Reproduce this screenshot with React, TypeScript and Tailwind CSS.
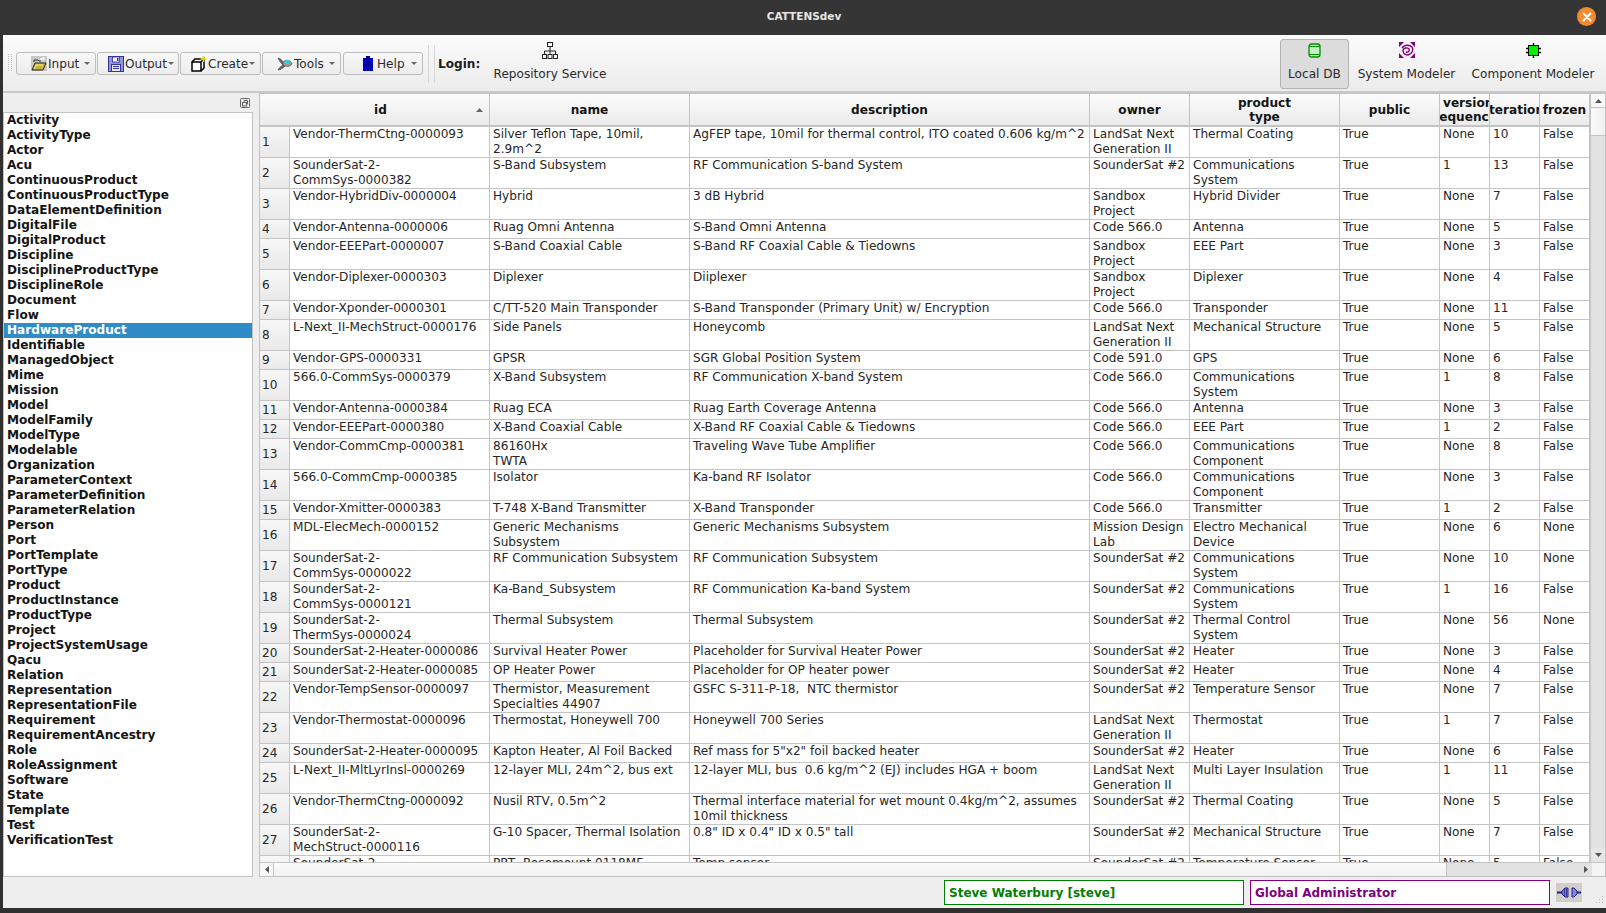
import React from "react";

const listItems = ["Activity","ActivityType","Actor","Acu","ContinuousProduct","ContinuousProductType","DataElementDefinition","DigitalFile","DigitalProduct","Discipline","DisciplineProductType","DisciplineRole","Document","Flow","HardwareProduct","Identifiable","ManagedObject","Mime","Mission","Model","ModelFamily","ModelType","Modelable","Organization","ParameterContext","ParameterDefinition","ParameterRelation","Person","Port","PortTemplate","PortType","Product","ProductInstance","ProductType","Project","ProjectSystemUsage","Qacu","Relation","Representation","RepresentationFile","Requirement","RequirementAncestry","Role","RoleAssignment","Software","State","Template","Test","VerificationTest"];

type Row = [number, string, string, string, string, string, string, string, string];
const rows: Row[] = [
[31,"Vendor-ThermCtng-0000093","Silver Teflon Tape, 10mil,\n2.9m^2","AgFEP tape, 10mil for thermal control, ITO coated 0.606 kg/m^2","LandSat Next\nGeneration II","Thermal Coating","None","10","False"],
[31,"SounderSat-2-\nCommSys-0000382","S-Band Subsystem","RF Communication S-band System","SounderSat #2","Communications\nSystem","1","13","False"],
[31,"Vendor-HybridDiv-0000004","Hybrid","3 dB Hybrid","Sandbox\nProject","Hybrid Divider","None","7","False"],
[19,"Vendor-Antenna-0000006","Ruag Omni Antenna","S-Band Omni Antenna","Code 566.0","Antenna","None","5","False"],
[31,"Vendor-EEEPart-0000007","S-Band Coaxial Cable","S-Band RF Coaxial Cable & Tiedowns","Sandbox\nProject","EEE Part","None","3","False"],
[31,"Vendor-Diplexer-0000303","Diplexer","Diiplexer","Sandbox\nProject","Diplexer","None","4","False"],
[19,"Vendor-Xponder-0000301","C/TT-520 Main Transponder","S-Band Transponder (Primary Unit) w/ Encryption","Code 566.0","Transponder","None","11","False"],
[31,"L-Next_II-MechStruct-0000176","Side Panels","Honeycomb","LandSat Next\nGeneration II","Mechanical Structure","None","5","False"],
[19,"Vendor-GPS-0000331","GPSR","SGR Global Position System","Code 591.0","GPS","None","6","False"],
[31,"566.0-CommSys-0000379","X-Band Subsystem","RF Communication X-band System","Code 566.0","Communications\nSystem","1","8","False"],
[19,"Vendor-Antenna-0000384","Ruag ECA","Ruag Earth Coverage Antenna","Code 566.0","Antenna","None","3","False"],
[19,"Vendor-EEEPart-0000380","X-Band Coaxial Cable","X-Band RF Coaxial Cable & Tiedowns","Code 566.0","EEE Part","1","2","False"],
[31,"Vendor-CommCmp-0000381","86160Hx\nTWTA","Traveling Wave Tube Amplifier","Code 566.0","Communications\nComponent","None","8","False"],
[31,"566.0-CommCmp-0000385","Isolator","Ka-band RF Isolator","Code 566.0","Communications\nComponent","None","3","False"],
[19,"Vendor-Xmitter-0000383","T-748 X-Band Transmitter","X-Band Transponder","Code 566.0","Transmitter","1","2","False"],
[31,"MDL-ElecMech-0000152","Generic Mechanisms\nSubsystem","Generic Mechanisms Subsystem","Mission Design\nLab","Electro Mechanical\nDevice","None","6","None"],
[31,"SounderSat-2-\nCommSys-0000022","RF Communication Subsystem","RF Communication Subsystem","SounderSat #2","Communications\nSystem","None","10","None"],
[31,"SounderSat-2-\nCommSys-0000121","Ka-Band_Subsystem","RF Communication Ka-band System","SounderSat #2","Communications\nSystem","1","16","False"],
[31,"SounderSat-2-\nThermSys-0000024","Thermal Subsystem","Thermal Subsystem","SounderSat #2","Thermal Control\nSystem","None","56","None"],
[19,"SounderSat-2-Heater-0000086","Survival Heater Power","Placeholder for Survival Heater Power","SounderSat #2","Heater","None","3","False"],
[19,"SounderSat-2-Heater-0000085","OP Heater Power","Placeholder for OP heater power","SounderSat #2","Heater","None","4","False"],
[31,"Vendor-TempSensor-0000097","Thermistor, Measurement\nSpecialties 44907","GSFC S-311-P-18,  NTC thermistor","SounderSat #2","Temperature Sensor","None","7","False"],
[31,"Vendor-Thermostat-0000096","Thermostat, Honeywell 700","Honeywell 700 Series","LandSat Next\nGeneration II","Thermostat","1","7","False"],
[19,"SounderSat-2-Heater-0000095","Kapton Heater, Al Foil Backed","Ref mass for 5\"x2\" foil backed heater","SounderSat #2","Heater","None","6","False"],
[31,"L-Next_II-MltLyrInsl-0000269","12-layer MLI, 24m^2, bus ext","12-layer MLI, bus  0.6 kg/m^2 (EJ) includes HGA + boom","LandSat Next\nGeneration II","Multi Layer Insulation","1","11","False"],
[31,"Vendor-ThermCtng-0000092","Nusil RTV, 0.5m^2","Thermal interface material for wet mount 0.4kg/m^2, assumes\n10mil thickness","SounderSat #2","Thermal Coating","None","5","False"],
[31,"SounderSat-2-\nMechStruct-0000116","G-10 Spacer, Thermal Isolation","0.8\" ID x 0.4\" ID x 0.5\" tall","SounderSat #2","Mechanical Structure","None","7","False"],
[31,"SounderSat-2-\nTempSens-0000099","PRT, Rosemount 0118MF","Temp sensor","SounderSat #2","Temperature Sensor","None","5","False"],
];

function Chevron() {
  return <svg width="6" height="3" viewBox="0 0 6 3" className="shrink-0 ml-auto"><path d="M0 0h6L3 3z" fill="#666" /></svg>;
}

function ToolBtn({ icon, label, width, pad, gap }: { icon: React.ReactNode; label: string; width: string; pad: string; gap: string }) {
  return (
    <div className={`${width} ${pad} ${gap} h-[23px] flex items-center pr-[5px] rounded-[3px] border border-[#bdbdbd] bg-gradient-to-b from-[#f8f8f8] to-[#ececec] text-[12.1px] text-[#2b2b2b]`}>
      {icon}
      <span className="leading-none relative top-[1px]">{label}</span>
      <Chevron />
    </div>
  );
}

function Mode({ icon, label, active, width }: { icon: React.ReactNode; label: string; active?: boolean; width: string }) {
  return (
    <div className={`${width} h-[50px] flex flex-col items-center rounded-[3px] border pt-[1px] text-[12.1px] text-[#2a2a2a] ${active ? "border-[#b3b3b3] bg-[#dcdcdc]" : "border-transparent"}`}>
      <div className="h-[18px] flex items-center justify-center">{icon}</div>
      <div className="mt-[7px] leading-[16px] whitespace-nowrap">{label}</div>
    </div>
  );
}

const cellClass = "border-r border-b border-[#c4c4c4] align-top p-0 pl-[3px] text-left overflow-hidden whitespace-pre";
const headClass = "h-[33px] p-0 border-r border-b-2 border-[#c4c4c4] font-bold bg-gradient-to-b from-[#fcfcfc] to-[#ebebeb] overflow-hidden whitespace-nowrap";

export default function App() {
  return (
    <div className="w-[1606px] h-[913px] bg-[#303030] overflow-hidden flex flex-col text-[#2b2b2b]" style={{ fontFamily: '"DejaVu Sans", sans-serif' }}>
      <div className="h-[35px] shrink-0 flex items-center justify-center relative bg-[#353535]">
        <span className="text-[10.5px] font-bold text-[#e6e6e6] relative top-[-1px] left-[1px]">CATTENSdev</span>
        <div className="absolute right-[10px] top-[7px] w-[19px] h-[19px] rounded-full bg-[#f28a2e] flex items-center justify-center">
          <svg width="10" height="10" viewBox="0 0 10 10"><path d="M1.5 1.5l7 7M8.500 1.500l-7 7" stroke="#fff" strokeWidth="2" strokeLinecap="round" /></svg>
        </div>
      </div>
      <div className="ml-[3px] h-[873px] shrink-0 bg-[#eeeeee] flex flex-col">
        <div className="h-[58px] shrink-0 flex items-start bg-gradient-to-b from-[#fbfbfb] to-[#ececec] border-b-2 border-[#c8c8c8]">
          <div className="ml-[5px] mt-[19px] w-[4px] h-[17px] border-x border-dotted border-[#c0c0c0]" />
          <div className="ml-[4px] mt-[17px] flex">
            <ToolBtn width="w-[80px]" pad="pl-[14px]" gap="gap-[1px]" label="Input" icon={
              <svg width="16" height="15" viewBox="0 0 16 15" className="shrink-0"><rect width="16" height="15" fill="#c6c6c6" /><path d="M3 6V4h4l1 1h2" fill="none" stroke="#333" /><path d="M9 4c1-2 3-2 4-1M13 1v3h-3" fill="none" stroke="#f4f4f4" strokeWidth="1.2" /><path d="M1 14l3-7h11l-3 7z" fill="#c8b43c" stroke="#2a2a10" /><path d="M3 13l2-4h7" stroke="#efe79a" fill="none" /></svg>} />
            <ToolBtn width="w-[82px] ml-[1px]" pad="pl-[10px]" gap="gap-[1px]" label="Output" icon={
              <svg width="16" height="16" viewBox="0 0 16 16" className="shrink-0"><rect x="0.5" y="0.5" width="15" height="15" fill="#8f95d8" stroke="#34349a" /><rect x="4.5" y="1" width="7" height="5" fill="#f4f4f4" stroke="#34349a" strokeWidth="0.8" /><rect x="9" y="2" width="1.5" height="3" fill="#34349a" /><rect x="3.5" y="8.5" width="9" height="7" fill="#eaeaea" stroke="#34349a" /><path d="M5 10.5h6M5 12.5h6" stroke="#34349a" /></svg>} />
            <ToolBtn width="w-[81px] ml-[1px]" pad="pl-[10px]" gap="gap-[1px]" label="Create" icon={
              <svg width="16" height="16" viewBox="0 0 16 16" className="shrink-0"><path d="M1 6h9v9H1zM1 6l3-3h7M10 6l3-3v9l-3 3" fill="#fff" stroke="#000" strokeWidth="1.5" /><path d="M12.500 0v6M9.500 3h6" stroke="#e8e000" strokeWidth="1.6" /></svg>} />
            <ToolBtn width="w-[79px] ml-[1px]" pad="pl-[14px]" gap="gap-[1px]" label="Tools" icon={
              <svg width="16" height="14" viewBox="0 0 16 14" className="shrink-0"><path d="M1 1c2 0 4 2 5 4l2 2-2 1C4 6 2 4 1 1zM1 13c1-2 3-4 5-5l2 1-2 2c-2 1-3 2-5 2z" fill="#6a6a6a" stroke="#333" strokeWidth="0.5" /><path d="M6 5c3-3 8-2 9 2-2 3-6 3-9 1z" fill="#9a9a9a" stroke="#444" strokeWidth="0.6" /><circle cx="10" cy="5" r="2.3" fill="#22d4e8" /></svg>} />
            <ToolBtn width="w-[80px] ml-[2px]" pad="pl-[19px]" gap="gap-[4px]" label="Help" icon={
              <svg width="10" height="15" viewBox="0 0 10 15" className="shrink-0"><rect x="0" y="2" width="10" height="13" fill="#0000c8" /><rect x="3" y="0" width="4" height="3" fill="#000090" /><path d="M5 3v12M0 9h10" stroke="#000070" /></svg>} />
          </div>
          <div className="ml-[5px] mt-[10px] h-[38px] w-[7px] border-x border-[#d6d6d6]" />
          <div className="ml-[3px] mt-[21px] w-[44px] text-[12.1px] font-bold leading-[16px] text-[#1c1c1c]">Login:</div>
          <div className="ml-[4px] mt-[4px] w-[128px]">
            <Mode width="w-full" label="Repository Service" icon={
              <svg width="16" height="17" viewBox="0 0 16 17" fill="none" stroke="#222"><rect x="5.5" y="0.5" width="5" height="4" /><rect x="0.5" y="12.5" width="4" height="4" /><rect x="6" y="12.5" width="4" height="4" /><rect x="11.5" y="12.5" width="4" height="4" /><path d="M8 4.500v8M2.500 12.500V9h11v3.500" /></svg>} />
          </div>
          <div className="flex-1" />
          <div className="mt-[4px] mr-[4px] flex items-start">
            <Mode active width="w-[69px]" label="Local DB" icon={
              <svg width="13" height="15" viewBox="0 0 13 15"><rect x="1" y="1" width="11" height="13" rx="2.5" fill="#c4eec4" stroke="#009000" strokeWidth="1.3" /><path d="M1 3.500h11M1 11.500h11" stroke="#009000" /></svg>} />
            <Mode width="w-[115px]" label="System Modeler" icon={
              <svg width="16" height="16" viewBox="0 0 16 16"><rect width="16" height="16" fill="#f8f2f8" /><path d="M0 0h5L0 5zM16 0h-5l5 5zM0 16h5l-5-5zM16 16h-5l5-5z" fill="#800080" /><path d="M3 6c2-3 7-4 10-1 2 3 0 7-4 8-3 0-5-2-5-5 1-2 4-3 6-1 1 2-1 4-3 3" fill="none" stroke="#800080" strokeWidth="1.4" /></svg>} />
            <Mode width="w-[138px]" label="Component Modeler" icon={
              <svg width="15" height="15" viewBox="0 0 15 15"><rect x="2.5" y="2.5" width="10" height="10" fill="#00f000" stroke="#000" /><path d="M7.500 0v3M7.500 12v3M0 5.500h3M0 9.500h3M12 5.500h3M12 9.500h3" stroke="#000" strokeWidth="1.4" /></svg>} />
          </div>
        </div>
        <div className="h-[784px] shrink-0 flex">
          <div className="w-[250px] shrink-0 flex flex-col">
            <div className="h-[19px] shrink-0 flex justify-end items-center pr-[3px]">
              <svg width="10" height="10" viewBox="0 0 10 10" fill="none" stroke="#666"><rect x="0.5" y="0.5" width="9" height="9" rx="1" /><rect x="2.5" y="4.500" width="4" height="3.500" /><path d="M4 4V2.500h3.500V6H6.500" /></svg>
            </div>
            <div className="h-[765px] border border-[#c2c2c2] bg-white text-[12.1px] font-bold text-[#141414] leading-[15px] overflow-hidden">
              {listItems.map((t) => (
                <div key={t} className={`h-[15px] pl-[3px] ${t === "HardwareProduct" ? "bg-[#308cc6] text-white" : ""}`}>{t}</div>
              ))}
            </div>
          </div>
          <div className="ml-[6px] flex-1 min-w-0 flex flex-col border border-[#c2c2c2] bg-white">
            <div className="flex-1 flex min-h-0">
              <div className="flex-1 min-w-0 overflow-hidden">
                <table className="table-fixed border-separate border-spacing-0 text-[12.1px] leading-[15px] w-[1330px] text-[#262626]">
                  <colgroup>
                    <col className="w-[30px]" /><col className="w-[200px]" /><col className="w-[200px]" /><col className="w-[400px]" /><col className="w-[100px]" /><col className="w-[150px]" /><col className="w-[100px]" /><col className="w-[50px]" /><col className="w-[50px]" /><col className="w-[50px]" />
                  </colgroup>
                  <thead>
                    <tr className="text-[#141414] leading-[14px]">
                      <th className="h-[33px] p-0 border-b-2 border-[#c4c4c4] bg-gradient-to-b from-[#fcfcfc] to-[#ebebeb]"></th>
                      <th className={`${headClass} relative pr-[18px]`}>id<span className="absolute right-[6px] top-[14px]"><svg width="7" height="4" viewBox="0 0 7 4" className="block"><path d="M3.500 0L7 4H0z" fill="#666" /></svg></span></th>
                      <th className={headClass}>name</th>
                      <th className={headClass}>description</th>
                      <th className={headClass}>owner</th>
                      <th className={headClass}>product<br />type</th>
                      <th className={headClass}>public</th>
                      <th className={headClass}>
                        <div className="text-left pl-[3px] overflow-hidden">version</div>
                        <div className="-mx-[10px] overflow-hidden">sequence</div>
                      </th>
                      <th className={headClass}><div className="-mx-[10px]">iteration</div></th>
                      <th className={headClass}>frozen</th>
                    </tr>
                  </thead>
                  <tbody>
                    {rows.map((r, i) => (
                      <tr key={i} style={{ height: r[0] }}>
                        <td className="p-0 pl-[2px] border-r border-b border-[#c4c4c4] bg-gradient-to-b from-[#f7f7f7] to-[#e9e9e9] align-middle">{i < 27 ? i + 1 : ""}</td>
                        <td className={cellClass}>{r[1]}</td>
                        <td className={cellClass}>{r[2]}</td>
                        <td className={cellClass}>{r[3]}</td>
                        <td className={cellClass}>{r[4]}</td>
                        <td className={cellClass}>{r[5]}</td>
                        <td className={cellClass}>True</td>
                        <td className={cellClass}>{r[6]}</td>
                        <td className={cellClass}>{r[7]}</td>
                        <td className={cellClass}>{r[8]}</td>
                      </tr>
                    ))}
                  </tbody>
                </table>
              </div>
              <div className="w-[15px] shrink-0 flex flex-col bg-[#e2e2e2] border-l border-[#c4c4c4]">
                <div className="h-[14px] bg-[#f8f8f8] border-b border-[#c4c4c4] flex items-center justify-center"><svg width="7" height="4" viewBox="0 0 7 4"><path d="M3.500 0L7 4H0z" fill="#555" /></svg></div>
                <div className="h-[28px] bg-gradient-to-r from-[#fafafa] to-[#f0f0f0] border-b border-[#c4c4c4]" />
                <div className="flex-1" />
                <div className="h-[14px] bg-[#e6e6e6] flex items-center justify-center"><svg width="7" height="4" viewBox="0 0 7 4"><path d="M0 0h7L3.500 4z" fill="#555" /></svg></div>
              </div>
            </div>
            <div className="h-[14px] shrink-0 flex border-t border-[#c4c4c4]">
              <div className="w-[14px] bg-[#f8f8f8] border-r border-[#c4c4c4] flex items-center justify-center"><svg width="4" height="7" viewBox="0 0 4 7"><path d="M4 0v7L0 3.500z" fill="#555" /></svg></div>
              <div className="w-[1172px] bg-gradient-to-b from-[#fbfbfb] to-[#f1f1f1]" />
              <div className="w-[133px] bg-[#e2e2e2] border-l border-[#c4c4c4]" />
              <div className="w-[13px] bg-[#e2e2e2] flex items-center justify-center"><svg width="4" height="7" viewBox="0 0 4 7"><path d="M0 0v7l4-3.500z" fill="#555" /></svg></div>
              <div className="flex-1 bg-[#f4f4f4]" />
            </div>
          </div>
        </div>
        <div className="relative flex-1 flex items-center justify-end pr-[24px] text-[12px] font-bold">
          <div className="w-[300px] h-[25px] border border-[#008000] bg-white text-[#008000] flex items-center pl-[4px]">Steve Waterbury [steve]</div>
          <div className="ml-[6px] w-[300px] h-[25px] border border-[#800080] bg-white text-[#800080] flex items-center pl-[4px]">Global Administrator</div>
          <div className="ml-[6px] w-[26px] h-[19px] bg-[#d0cec6] flex items-center justify-center">
            <svg width="26" height="19" viewBox="0 0 26 19"><path d="M1 9.500h5M20 9.500h5" stroke="#22228a" strokeWidth="2" /><path d="M6 8l3-3h3v9H9L6 11z" fill="#7f85d8" stroke="#22228a" /><path d="M8.500 5.500v8M10.500 5.500v8" stroke="#22228a" strokeWidth="0.8" /><path d="M16 5h2l3 3v3l-3 3h-2z" fill="#7f85d8" stroke="#22228a" /></svg>
          </div>
          <svg width="11" height="11" viewBox="0 0 11 11" className="absolute right-[1px] bottom-[2px]" fill="#bdbdbd"><rect x="8" y="1" width="1" height="1" /><rect x="5" y="4" width="1" height="1" /><rect x="8" y="4" width="1" height="1" /><rect x="2" y="7" width="1" height="1" /><rect x="5" y="7" width="1" height="1" /><rect x="8" y="7" width="1" height="1" /></svg>
        </div>
      </div>
    </div>
  );
}
